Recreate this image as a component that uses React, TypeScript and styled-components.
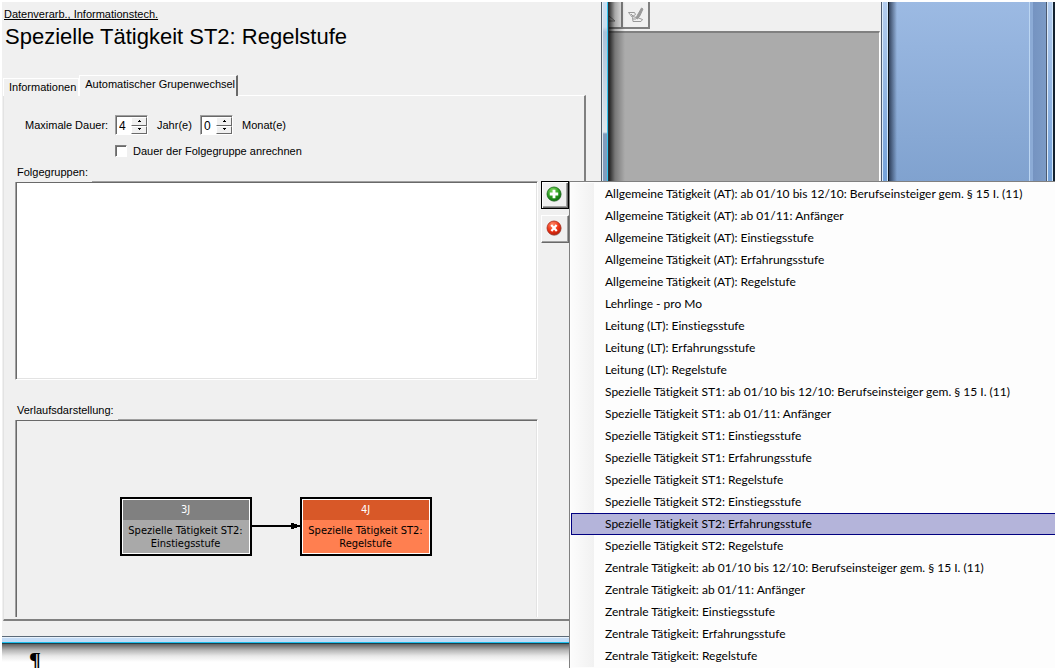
import React from "react";
import styled, { createGlobalStyle, css } from "styled-components";

const ui = '"Liberation Sans", Arial, sans-serif';
const menuFont = 'Lato, "Segoe UI", sans-serif';
const nodeFont = '"DejaVu Sans Condensed", Tahoma, sans-serif';
const face = "#f0f0f0";

const Global = createGlobalStyle`
  *, *::before, *::after { box-sizing: border-box; }
  body { margin: 0; background: #fff; color: #000; font: 11px/16px ${ui}; overflow: hidden; }
  button, input { font: inherit; color: inherit; }
`;

const Screen = styled.div`
  padding: 2px;
  height: 100vh;
`;

const Desktop = styled.div`
  display: grid;
  grid-template-columns: minmax(0, 607fr) minmax(0, 279fr) minmax(0, 167fr);
  height: 100%;
  overflow: hidden;
`;

const LeftColumn = styled.div`
  display: flex;
  flex-direction: column;
  position: relative;
  z-index: 1;
`;

const Dialog = styled.section`
  display: flex;
  flex-direction: column;
  position: relative;
`;

const Client = styled.div`
  display: flex;
`;

const Face = styled.div`
  flex: 1;
  min-width: 0;
  background: ${face};
  padding: 4px 0 15px 0;
`;

const FrameRight = styled.div`
  width: 8px;
  border-left: 1px solid #4c5a68;
  border-right: 1px solid #26303a;
  background:
    linear-gradient(90deg, #e4edf4 0 1px, transparent 1px 5px, #35c5f0 5px),
    linear-gradient(#c9def2 0, #c9dcec 25px, #a9c1d8 30px, #dfe6ec 130px, #829dbd 132px, #829dbd 100%);
`;

const FrameBottom = styled.div`
  height: 8px;
  border-top: 1px solid #5c6a78;
  border-bottom: 1px solid #26404a;
  background: linear-gradient(#e8f2fc 0 1px, #c4dcf6 1px 5px, #1cc0ee 5px);
`;

const Document = styled.div`
  flex: 1;
  min-height: 0;
  overflow: hidden;
  background: linear-gradient(#606060, #b4b4b4 6px, #e8e8e8 12px, #fff 18px);
  padding: 4px 27px;
  font: bold 22px/24px "Liberation Serif", serif;
`;

const GroupLink = styled.a`
  display: block;
  width: max-content;
  margin-left: 2px;
  color: #000;
  line-height: 16px;
`;

const Title = styled.h1`
  margin: 0 0 0 3px;
  font: 22px/30px ${ui};
`;

const Tabs = styled.div`
  display: flex;
  align-items: flex-end;
  height: 21px;
  margin: 23px 0 0 1px;
`;

const Tab = styled.button<{ $active?: boolean }>`
  height: 18px;
  padding: 0 2px 3px 5px;
  background: ${face};
  border: 0 solid #fff;
  border-width: 1px 1px 0 1px;
  position: relative;
  ${(p) =>
    p.$active &&
    css`
      height: 21px;
      padding: 0 1px 4px 5px;
      border-right: 2px solid #696969;
      z-index: 1;
    `}
`;

const Pane = styled.div`
  display: flex;
  flex-direction: column;
  margin: -1px 15px 0 1px;
  padding: 18px 15px 2px 11px;
  border: 1px solid #fff;
  border-left-color: #e3e3e3;
  border-right: 2px solid #808080;
  border-bottom: 2px solid #808080;
`;

const DurationRow = styled.div`
  display: flex;
  align-items: center;
  height: 22px;
  padding-left: 10px;
`;

const RowLabel = styled.label`
  width: 90px;
`;

const Unit = styled.span`
  width: 52px;
  padding-left: 9px;
`;

const Spinner = styled.span`
  display: flex;
  width: 33px;
  height: 20px;
  background: #fff;
  border: 1px solid #a0a0a0;
  border-right-color: #fff;
  border-bottom-color: #fff;
  box-shadow: inset 1px 1px #696969;
  padding: 1px 0 0 1px;
`;

const SpinValue = styled.input`
  flex: 1;
  min-width: 0;
  border: 0;
  outline: 0;
  background: none;
  padding: 0 0 0 2px;
  font-size: 12px;
`;

const SpinButtons = styled.span`
  display: flex;
  flex-direction: column;
  width: 16px;
`;

const SpinButton = styled.button`
  display: flex;
  align-items: center;
  justify-content: center;
  flex: 1;
  padding: 0;
  background: ${face};
  border: 1px solid #fff;
  border-right-color: #696969;
  border-bottom-color: #696969;
`;

const CheckRow = styled.label`
  display: flex;
  align-items: center;
  gap: 6px;
  height: 18px;
  margin: 6px 0 0 100px;
`;

const Check = styled.input`
  appearance: none;
  width: 12px;
  height: 12px;
  margin: 0;
  background: #fff;
  border: 1px solid #808080;
  border-right-color: #fff;
  border-bottom-color: #fff;
  box-shadow: inset 1px 1px #696969;
`;

const Caption = styled.div`
  width: max-content;
  height: 18px;
  margin: 4px 0 -1px 0;
  padding: 0 4px 0 2px;
  background: ${face};
  position: relative;
`;

const ListRow = styled.div`
  display: flex;
  gap: 3px;
  margin-bottom: 18px;
`;

const GroupList = styled.div`
  flex: 1;
  height: 199px;
  background: #fff;
  border: 1px solid #a0a0a0;
  border-right-color: #fff;
  border-bottom-color: #fff;
  box-shadow: inset 1px 1px #696969, inset -1px -1px #e3e3e3;
`;

const Actions = styled.div`
  display: flex;
  flex-direction: column;
  gap: 6px;
  width: 28px;
  position: relative;
`;

const ActionButton = styled.button<{ $pressed?: boolean }>`
  display: flex;
  align-items: center;
  justify-content: center;
  height: 28px;
  padding: 0 2px 2px 0;
  background: ${face};
  border: 1px solid #fff;
  border-right-color: #696969;
  border-bottom-color: #696969;
  box-shadow: inset -1px -1px #a0a0a0;
  ${(p) =>
    p.$pressed &&
    css`
      border-color: #000;
      box-shadow: inset 1px 1px #fff, inset -1px -1px #696969, inset -2px -2px #a0a0a0;
    `}
`;

const Canvas = styled.div`
  display: flex;
  justify-content: center;
  align-items: flex-start;
  height: 198px;
  margin-right: 31px;
  padding: 77px 2px 0 0;
  border: 1px solid #a0a0a0;
  border-right-color: #fff;
  border-bottom: 0;
  box-shadow: inset 1px 1px #696969, inset -1px 0 #e3e3e3;
`;

const Node = styled.div<{ $head: string; $body: string }>`
  width: 132px;
  height: 59px;
  border: 2px solid #000;
  padding: 1px;
  background: linear-gradient(${(p) => p.$head} 0 20px, ${(p) => p.$body} 20px) content-box, #fff;
  font: 11px/13px ${nodeFont};
  text-align: center;
  white-space: nowrap;
`;

const NodeHead = styled.div`
  height: 20px;
  line-height: 20px;
  color: #fff;
  margin-bottom: 4px;
`;

const Menu = styled.ul`
  position: absolute;
  top: 0;
  left: 100%;
  z-index: 10;
  min-width: 600px;
  margin: 0;
  padding: 1px 1px 12px 1px;
  list-style: none;
  border: 1px solid #808080;
  background: #fdfdfd;
  font: 12px/22px ${menuFont};
  font-variant-ligatures: none;
`;

const MenuItem = styled.button<{ $selected?: boolean }>`
  display: block;
  width: 100%;
  height: 22px;
  padding: 0 0 0 34px;
  border: 0;
  text-align: left;
  white-space: nowrap;
  font-variant-ligatures: none;
  background: linear-gradient(90deg, #fcfcfc, #f1f1f1 23px, #fdfdfd 23px);
  ${(p) =>
    p.$selected &&
    css`
      background: #b4b4da;
      box-shadow: inset 0 0 0 1px #000080;
    `}
`;

const BackWindow = styled.section`
  display: flex;
  height: 100%;
  position: relative;
`;

const BackClient = styled.div`
  flex: 1;
  display: flex;
  flex-direction: column;
  background: ${face};
`;

const Toolbar = styled.div`
  display: flex;
  height: 28px;
`;

const ToolButton = styled.button<{ $cut?: boolean }>`
  display: flex;
  align-items: center;
  justify-content: ${(p) => (p.$cut ? "flex-start" : "center")};
  width: ${(p) => (p.$cut ? 14 : 27)}px;
  height: 27px;
  padding: 0;
  background: ${face};
  border: 0 solid #808080;
  border-width: 0 2px 2px 0;
`;

const Mdi = styled.div`
  flex: 1;
  margin: 1px 1px 0 0;
  background: #ababab;
  border-top: 2px solid #808080;
  border-right: 1px solid #fff;
`;

const WindowShade = styled.div`
  position: absolute;
  inset: 0 auto 0 0;
  width: 16px;
  background: linear-gradient(90deg, rgba(0, 0, 0, 0.8), rgba(0, 0, 0, 0.3) 6px, transparent);
`;

const AeroFrame = styled.div`
  width: 7px;
  border-left: 1px solid #4c5a70;
  background:
    linear-gradient(90deg, #dcebfa 0 1px, transparent 1px 5px, #d0e6fa 5px),
    linear-gradient(#b4cdee, #8fb3e2 100px, #74a2da 180px);
`;

const Wallpaper = styled.div`
  display: flex;
  height: 100%;
  background: linear-gradient(#9cbae3, #80a2cf 180px);
`;

const WallShade = styled.div`
  flex: 1;
  border-left: 1px solid #10161e;
  background: linear-gradient(90deg, rgba(10, 20, 40, 0.7), transparent 8px);
`;

const Strip = styled.div`
  width: 17px;
  border-left: 1px solid #bcd6f2;
  background: linear-gradient(90deg, #8cabd6 0 3px, #7593c1 3px, #7c9bc6);
`;

const EdgeFrame = styled(AeroFrame)`
  width: 9px;
  border-right: 2px solid #142230;
`;

const groups = [
  "Allgemeine Tätigkeit (AT): ab 01/10 bis 12/10: Berufseinsteiger gem. § 15 I. (11)",
  "Allgemeine Tätigkeit (AT): ab 01/11: Anfänger",
  "Allgemeine Tätigkeit (AT): Einstiegsstufe",
  "Allgemeine Tätigkeit (AT): Erfahrungsstufe",
  "Allgemeine Tätigkeit (AT): Regelstufe",
  "Lehrlinge - pro Mo",
  "Leitung (LT): Einstiegsstufe",
  "Leitung (LT): Erfahrungsstufe",
  "Leitung (LT): Regelstufe",
  "Spezielle Tätigkeit ST1: ab 01/10 bis 12/10: Berufseinsteiger gem. § 15 I. (11)",
  "Spezielle Tätigkeit ST1: ab 01/11: Anfänger",
  "Spezielle Tätigkeit ST1: Einstiegsstufe",
  "Spezielle Tätigkeit ST1: Erfahrungsstufe",
  "Spezielle Tätigkeit ST1: Regelstufe",
  "Spezielle Tätigkeit ST2: Einstiegsstufe",
  "Spezielle Tätigkeit ST2: Erfahrungsstufe",
  "Spezielle Tätigkeit ST2: Regelstufe",
  "Zentrale Tätigkeit: ab 01/10 bis 12/10: Berufseinsteiger gem. § 15 I. (11)",
  "Zentrale Tätigkeit: ab 01/11: Anfänger",
  "Zentrale Tätigkeit: Einstiegsstufe",
  "Zentrale Tätigkeit: Erfahrungsstufe",
  "Zentrale Tätigkeit: Regelstufe",
];

const selectedGroup = "Spezielle Tätigkeit ST2: Erfahrungsstufe";

function NumberSpinner({ id, label, value }: { id: string; label?: string; value: string }) {
  return (
    <Spinner>
      <SpinValue id={id} aria-label={label} defaultValue={value} inputMode="numeric" />
      <SpinButtons>
        <SpinButton aria-label="Erhöhen">
          <svg width="5" height="3" shapeRendering="crispEdges"><path d="M2 0h1v1h1v1H1V1h1z" /></svg>
        </SpinButton>
        <SpinButton aria-label="Verringern">
          <svg width="5" height="3" shapeRendering="crispEdges"><path d="M1 0h3v1H3v1H2V1H1z" /></svg>
        </SpinButton>
      </SpinButtons>
    </Spinner>
  );
}

function RoundIcon({ kind }: { kind: "add" | "remove" }) {
  const add = kind === "add";
  return (
    <svg width="16" height="16" viewBox="0 0 16 16">
      <defs>
        <radialGradient id={kind} cx="40%" cy="25%" r="75%">
          <stop offset="0" stopColor={add ? "#7fd860" : "#ff8a68"} />
          <stop offset="0.6" stopColor={add ? "#2c9c20" : "#ee3416"} />
          <stop offset="1" stopColor={add ? "#117010" : "#b81c08"} />
        </radialGradient>
      </defs>
      <circle cx="8.5" cy="8.8" r="7" fill="#000" opacity="0.25" />
      <circle cx="8" cy="8" r="7" fill={`url(#${kind})`} stroke={add ? "#186c18" : "#a83020"} strokeWidth="0.8" />
      <path
        d={add ? "M8 3.8v8.4M3.8 8h8.4" : "M5.2 5l5.6 6M10.6 5l-5.2 6"}
        stroke="#fff"
        strokeWidth={add ? 2.8 : 2.2}
      />
    </svg>
  );
}

export default function App() {
  return (
    <Screen>
      <Global />
      <Desktop>
        <LeftColumn>
          <Dialog>
            <Client>
              <Face>
                <GroupLink href="#">Datenverarb., Informationstech.</GroupLink>
                <Title>Spezielle Tätigkeit ST2: Regelstufe</Title>
                <Tabs role="tablist">
                  <Tab role="tab">Informationen</Tab>
                  <Tab role="tab" aria-selected $active>Automatischer Grupenwechsel</Tab>
                </Tabs>
                <Pane role="tabpanel">
                  <DurationRow>
                    <RowLabel htmlFor="years">Maximale Dauer:</RowLabel>
                    <NumberSpinner id="years" value="4" />
                    <Unit>Jahr(e)</Unit>
                    <NumberSpinner id="months" label="Monate" value="0" />
                    <Unit>Monat(e)</Unit>
                  </DurationRow>
                  <CheckRow>
                    <Check type="checkbox" />
                    Dauer der Folgegruppe anrechnen
                  </CheckRow>
                  <Caption id="followers">Folgegruppen:</Caption>
                  <ListRow>
                    <GroupList role="listbox" aria-labelledby="followers" />
                    <Actions>
                      <ActionButton $pressed aria-label="Hinzufügen"><RoundIcon kind="add" /></ActionButton>
                      <ActionButton aria-label="Entfernen"><RoundIcon kind="remove" /></ActionButton>
                      <Menu>
                        {groups.map((g) => (
                          <li key={g}><MenuItem $selected={g === selectedGroup}>{g}</MenuItem></li>
                        ))}
                      </Menu>
                    </Actions>
                  </ListRow>
                  <Caption id="progress">Verlaufsdarstellung:</Caption>
                  <Canvas role="group" aria-labelledby="progress">
                    <Node $head="#808080" $body="#a9a9a9">
                      <NodeHead>3J</NodeHead>
                      Spezielle Tätigkeit ST2:<br />Einstiegsstufe
                    </Node>
                    <svg width="48" height="59" shapeRendering="crispEdges">
                      <path d="M0 28h39v-2h3v1h3v1h3v2h-3v1h-3v1h-3v-2H0z" />
                    </svg>
                    <Node $head="#d85828" $body="#ff7f50">
                      <NodeHead>4J</NodeHead>
                      Spezielle Tätigkeit ST2:<br />Regelstufe
                    </Node>
                  </Canvas>
                </Pane>
              </Face>
              <FrameRight />
            </Client>
            <FrameBottom />
          </Dialog>
          <Document>¶</Document>
        </LeftColumn>
        <BackWindow>
          <BackClient>
            <Toolbar>
              <ToolButton $cut aria-label="Werkzeug">
                <svg width="12" height="16" viewBox="0 0 12 16" fill="none" stroke="#808080"><path d="M0 9l6 5H0" /></svg>
              </ToolButton>
              <ToolButton aria-label="Bearbeiten">
                <svg width="18" height="16" viewBox="0 0 18 16" fill="none" stroke="#999">
                  <path d="M1.5 5.5h6l1 2-3 2 4 1M1.5 5.5l4 5 .5 4h8l1.5-2-4-1.5" />
                  <path d="M9 11l1.5-3 4-7 1.5 1-3 6.5-2.5 3.5z" fill="#999" />
                  <path d="M4 7l2 2M6 12h3" />
                </svg>
              </ToolButton>
            </Toolbar>
            <Mdi />
          </BackClient>
          <AeroFrame />
          <WindowShade />
        </BackWindow>
        <Wallpaper>
          <WallShade />
          <Strip />
          <EdgeFrame />
        </Wallpaper>
      </Desktop>
    </Screen>
  );
}
